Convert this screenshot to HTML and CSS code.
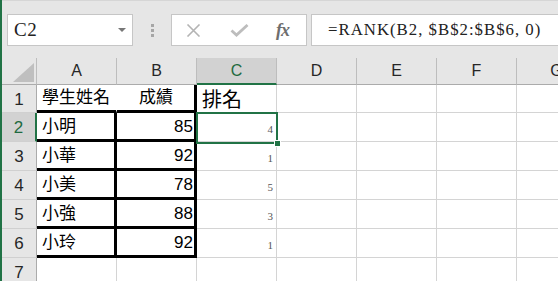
FILE: index.html
```html
<!DOCTYPE html>
<html lang="zh-Hant">
<head>
  <meta charset="UTF-8" />
  <title>RANK</title>
  <link rel="stylesheet" href="styles.css">
</head>
<body>
  <div class="app">
    <div class="fbar">
      <div class="namebox">
        <span>C2</span>
        <span class="caret"></span>
      </div>
      <div class="grip"><i></i><i></i><i></i></div>
      <div class="fnbox">
        <svg class="ico-x" width="15" height="13" viewBox="0 0 15 13">
          <path d="M1.5 0.5 L13.5 12.5 M13.5 0.5 L1.5 12.5" stroke="#b4b4b4" stroke-width="1.6" fill="none"/>
        </svg>
        <svg class="ico-ok" width="19" height="13" viewBox="0 0 19 13">
          <path d="M1.5 6.5 L6.5 11 L17.5 1" stroke="#bdbdbd" stroke-width="2.8" fill="none"/>
        </svg>
        <span class="fx">fx</span>
      </div>
      <div class="formula">=RANK(B2, $B$2:$B$6, 0)</div>
    </div>

    <div class="sheet">
      <div class="corner">
        <svg width="21" height="19" viewBox="0 0 21 19"><polygon points="21,0 21,19 0,19" fill="#bfbfbf"/></svg>
      </div>
      <div class="ch">A</div>
      <div class="ch">B</div>
      <div class="ch sel">C</div>
      <div class="ch">D</div>
      <div class="ch">E</div>
      <div class="ch">F</div>
      <div class="ch">G</div>

      <div class="rh">1</div>
      <div class="cell bb">學生姓名</div>
      <div class="cell bx mid">成績</div>
      <div class="cell big">排名</div>
      <div class="cell"></div>
      <div class="cell"></div>
      <div class="cell"></div>
      <div class="cell"></div>

      <div class="rh sel">2</div>
      <div class="cell bx">小明</div>
      <div class="cell bx num">85</div>
      <div class="cell rank">4</div>
      <div class="cell"></div>
      <div class="cell"></div>
      <div class="cell"></div>
      <div class="cell"></div>

      <div class="rh">3</div>
      <div class="cell bx">小華</div>
      <div class="cell bx num">92</div>
      <div class="cell rank">1</div>
      <div class="cell"></div>
      <div class="cell"></div>
      <div class="cell"></div>
      <div class="cell"></div>

      <div class="rh">4</div>
      <div class="cell bx">小美</div>
      <div class="cell bx num">78</div>
      <div class="cell rank">5</div>
      <div class="cell"></div>
      <div class="cell"></div>
      <div class="cell"></div>
      <div class="cell"></div>

      <div class="rh">5</div>
      <div class="cell bx">小強</div>
      <div class="cell bx num">88</div>
      <div class="cell rank">3</div>
      <div class="cell"></div>
      <div class="cell"></div>
      <div class="cell"></div>
      <div class="cell"></div>

      <div class="rh">6</div>
      <div class="cell bx">小玲</div>
      <div class="cell bx num">92</div>
      <div class="cell rank">1</div>
      <div class="cell"></div>
      <div class="cell"></div>
      <div class="cell"></div>
      <div class="cell"></div>

      <div class="rh">7</div>
      <div class="cell"></div>
      <div class="cell"></div>
      <div class="cell"></div>
      <div class="cell"></div>
      <div class="cell"></div>
      <div class="cell"></div>
      <div class="cell"></div>

      <div class="selection"><span class="handle"></span></div>
    </div>
  </div>
</body>
</html>
```

FILE: styles.css
```css
* {
  box-sizing: border-box;
}

html, body {
  margin: 0;
  padding: 0;
  overflow: hidden;
  background: #fff;
}

.app {
  width: 600px;
  height: 281px;
  border-left: 2px solid #217346;
  font-family: 'Liberation Sans', 'Noto Sans CJK TC', sans-serif;
}

/* formula bar */
.fbar {
  height: 58px;
  background: #e6e6e6;
  border-top: 1px solid #d6d6d6;
  display: flex;
  align-items: flex-start;
  padding-top: 13px;
}

.namebox {
  width: 126px;
  height: 32px;
  margin-left: 5px;
  background: #fff;
  border: 1px solid #c6c6c6;
  display: flex;
  align-items: center;
  justify-content: space-between;
  padding: 0 6px 0 6px;
  font-family: 'Liberation Serif', serif;
  font-size: 19px;
  letter-spacing: 0.5px;
  color: #222;
}

.caret {
  width: 0;
  height: 0;
  border-left: 4px solid transparent;
  border-right: 4px solid transparent;
  border-top: 4px solid #777;
}

.grip {
  width: 3px;
  margin: 10px 17px 0 18px;
  display: flex;
  flex-direction: column;
  gap: 2px;
}

.grip i {
  display: block;
  width: 3px;
  height: 3px;
  background: #a6a6a6;
}

.fnbox {
  width: 136px;
  height: 32px;
  background: #fff;
  border: 1px solid #c6c6c6;
  display: flex;
  align-items: center;
  padding-left: 14px;
}

.ico-ok {
  margin-left: 29px;
}

.fx {
  margin-left: 27px;
  font-family: 'Liberation Serif', serif;
  font-style: italic;
  font-weight: bold;
  font-size: 18px;
  color: #6e6e6e;
  letter-spacing: -1px;
}

.formula {
  flex: 1;
  height: 32px;
  margin-left: 4px;
  background: #fff;
  border: 1px solid #c6c6c6;
  border-right: none;
  padding-left: 16px;
  display: flex;
  align-items: center;
  font-family: 'Liberation Serif', serif;
  font-size: 16.8px;
  letter-spacing: 1px;
  color: #222;
  white-space: nowrap;
}

/* sheet grid */
.sheet {
  position: relative;
  display: grid;
  grid-template-columns: 35px repeat(7, 80px);
  grid-template-rows: 27px 28px repeat(6, 29px);
}

.corner {
  background: #e6e6e6;
  border-right: 1px solid #bdbdbd;
  border-bottom: 1px solid #ababab;
  display: flex;
  align-items: flex-end;
  justify-content: flex-end;
  padding: 0 2px 2px 0;
}

.ch {
  background: #e6e6e6;
  border-right: 1px solid #bdbdbd;
  border-bottom: 1px solid #ababab;
  display: flex;
  align-items: center;
  justify-content: center;
  font-size: 16px;
  color: #262626;
}

.ch.sel {
  background: #d2d2d2;
  border-bottom: 2px solid #217346;
  color: #1e6a40;
}

.rh {
  background: #e6e6e6;
  border-right: 1px solid #ababab;
  border-bottom: 1px solid #d0d0d0;
  display: flex;
  align-items: center;
  justify-content: center;
  font-size: 17px;
  color: #262626;
  padding-top: 2px;
}

.rh.sel {
  background: #d2d2d2;
  border-right: 2px solid #217346;
  color: #1e6a40;
}

.cell {
  border-right: 1px solid #d4d4d4;
  border-bottom: 1px solid #d4d4d4;
  display: flex;
  align-items: flex-end;
  padding: 0 4px 2px 5px;
  font-size: 17px;
  line-height: 20px;
  color: #000;
  white-space: nowrap;
}

.cell.bb {
  border-bottom: 3px solid #000;
  border-right-color: #fff;
}

.cell.bx {
  border-right: 3px solid #000;
  border-bottom: 3px solid #000;
}

.mid {
  justify-content: center;
}

.num {
  justify-content: flex-end;
  padding-right: 1px;
}

.big {
  font-size: 20px;
  line-height: 22px;
  padding-bottom: 1px;
}

.rank {
  justify-content: flex-end;
  font-family: 'Liberation Serif', serif;
  font-size: 11px;
  line-height: 12px;
  color: #555;
  padding-right: 3px;
  padding-bottom: 6px;
}

.selection {
  position: absolute;
  left: 194px;
  top: 54px;
  width: 82px;
  height: 32px;
  border: 2px solid #217346;
}

.handle {
  position: absolute;
  right: -5px;
  bottom: -5px;
  width: 7px;
  height: 7px;
  background: #217346;
  border: 1px solid #fff;
}
```
